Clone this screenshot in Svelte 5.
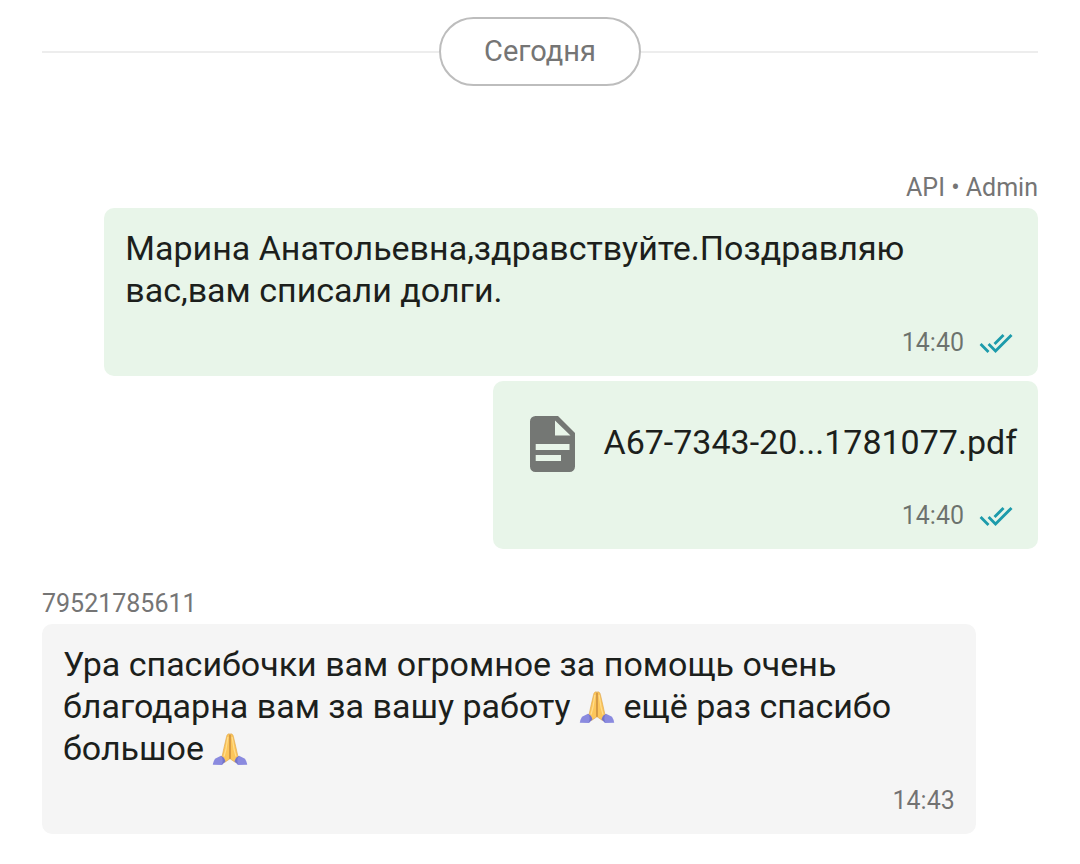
<script lang="ts">
  type Part = { kind: 'text' | 'pray'; value?: string };
  type Message = {
    side: 'out' | 'in';
    author?: string;
    parts?: Part[];
    file?: string;
    time: string;
    read?: boolean;
  };

  const messages: Message[] = [
    {
      side: 'out',
      author: 'API • Admin',
      parts: [{ kind: 'text', value: 'Марина Анатольевна,здравствуйте.Поздравляю вас,вам списали долги.' }],
      time: '14:40',
      read: true
    },
    { side: 'out', file: 'A67-7343-20...1781077.pdf', time: '14:40', read: true },
    {
      side: 'in',
      author: '79521785611',
      parts: [
        { kind: 'text', value: 'Ура спасибочки вам огромное за помощь очень благодарна вам за вашу работу ' },
        { kind: 'pray' },
        { kind: 'text', value: ' ещё раз спасибо большое ' },
        { kind: 'pray' }
      ],
      time: '14:43'
    }
  ];
</script>

<main class="chat">
  <div class="day"><span>Сегодня</span></div>

  {#each messages as message}
    <article class="message {message.side}">
      {#if message.author}
        <div class="author">{message.author}</div>
      {/if}
      <div class="bubble" class:attachment={message.file}>
        {#if message.file}
          <a class="file" href="#file">
            <svg class="doc" viewBox="0 0 45 56" aria-hidden="true">
              <path fill="#747774" fill-rule="evenodd" d="M5.500 0H28L45 17V50.500A5.500 5.500 0 0 1 39.500 56H5.500A5.500 5.500 0 0 1 0 50.500V5.500A5.500 5.500 0 0 1 5.500 0ZM25 4.500V19.500H40.500ZM5.700 28V34H39.500V28ZM5.700 39V45H31V39Z" />
            </svg>
            <span>{message.file}</span>
          </a>
        {:else}
          <p class="text">{#each message.parts ?? [] as part}{#if part.kind === 'text'}{part.value}{:else}<svg class="pray" viewBox="0 0 36 34" role="img" aria-label="🙏">
            <path d="M17.800 1C16.300.4 15 1.500 14.600 3.500L11.800 15.500 10.300 22.500 8.500 24.500 12.500 29.500 17.900 25.800Z" fill="#fcc65a" stroke="#dca24a" stroke-width=".6" />
            <path d="M18.200 1C19.700.4 21 1.500 21.400 3.500L24.200 15.500 25.700 22.500 27.500 24.500 23.500 29.500 18.100 25.800Z" fill="#fcc65a" stroke="#dca24a" stroke-width=".6" />
            <path d="M15.900 4 13.900 16.500 12 23.500M20.100 4 22.100 16.500 24 23.500" fill="none" stroke="#ffdc8c" stroke-width="1.200" />
            <path d="M18 2V25.800" stroke="#b97728" stroke-width=".9" />
            <path d="M9 22.800 3 25.800Q1 29 .8 31.800L9.800 32 13.400 28.200Q12.500 24.500 9 22.800Z" fill="#8a8adf" />
            <path d="M27 22.800 33 25.800Q35 29 35.200 31.800L26.200 32 22.600 28.200Q23.500 24.500 27 22.800Z" fill="#8a8adf" />
            <path d="M9 22.800Q11.800 26 9.800 32L13.400 28.200Q12.500 24.500 9 22.800ZM27 22.800Q24.200 26 26.200 32L22.600 28.200Q23.500 24.500 27 22.800Z" fill="#7474c8" />
          </svg>{/if}{/each}</p>
        {/if}
        <footer class="meta">
          <time>{message.time}</time>
          {#if message.read}
            <svg class="ticks" viewBox="0 0 24 24" role="img" aria-label="Прочитано">
              <path fill="#1c9bab" d="M18 7l-1.410-1.410-6.340 6.340 1.410 1.410L18 7zm4.240-1.410L11.660 16.170 7.480 12l-1.410 1.410L11.660 19l12-12-1.420-1.410zM.410 13.410L6 19l1.410-1.410L1.830 12 .410 13.410z" />
            </svg>
          {/if}
        </footer>
      </div>
    </article>
  {/each}
</main>

<style>
  :global(body) {
    margin: 0;
    background: #fff;
  }

  .chat {
    display: flex;
    flex-direction: column;
    padding: 17px 42px 30px;
    font-family: Roboto, "Noto Sans", sans-serif;
    color: #1c1f1c;
  }

  .day {
    display: flex;
    align-items: center;
    margin-bottom: 87px;
    color: #757575;
    font-size: 29px;
    line-height: 33px;
  }

  .day::before,
  .day::after {
    content: "";
    flex: 1;
    height: 2px;
    background: #ededed;
  }

  .day span {
    padding: 16px 43px;
    border: 2px solid #bdbdbd;
    border-radius: 35px;
  }

  .message {
    display: flex;
    flex-direction: column;
    align-items: flex-start;
  }

  .message.out {
    align-items: flex-end;
    margin-bottom: 5px;
  }

  .message.in {
    margin-top: 35px;
  }

  .author {
    margin-bottom: 5px;
    color: #757575;
    font-size: 25px;
    line-height: 30px;
  }

  .bubble {
    display: flex;
    flex-direction: column;
    box-sizing: border-box;
    width: 93.75%;
    padding: 19px 21px 16px;
    border-radius: 10px;
    background: #f5f5f5;
  }

  .out .bubble {
    background: #e8f5e9;
  }

  .bubble.attachment {
    width: auto;
    padding-left: 37px;
  }

  .text {
    margin: 0 0 15px;
    font-size: 34px;
    line-height: 42px;
  }

  .pray {
    width: 36px;
    height: 34px;
    vertical-align: -7px;
  }

  .file {
    display: flex;
    align-items: center;
    gap: 28px;
    height: 84px;
    margin-bottom: 15px;
    color: inherit;
    font-size: 34px;
    line-height: 42px;
    text-decoration: none;
  }

  .doc {
    flex: none;
    width: 45px;
    height: 56px;
    margin-top: 4px;
  }

  .meta {
    display: flex;
    align-items: center;
    justify-content: flex-end;
    gap: 15px;
    height: 34px;
    color: rgba(0, 0, 0, 0.54);
    font-size: 25px;
    line-height: 30px;
  }

  .ticks {
    width: 34px;
    height: 34px;
    margin-right: 4px;
  }
</style>
